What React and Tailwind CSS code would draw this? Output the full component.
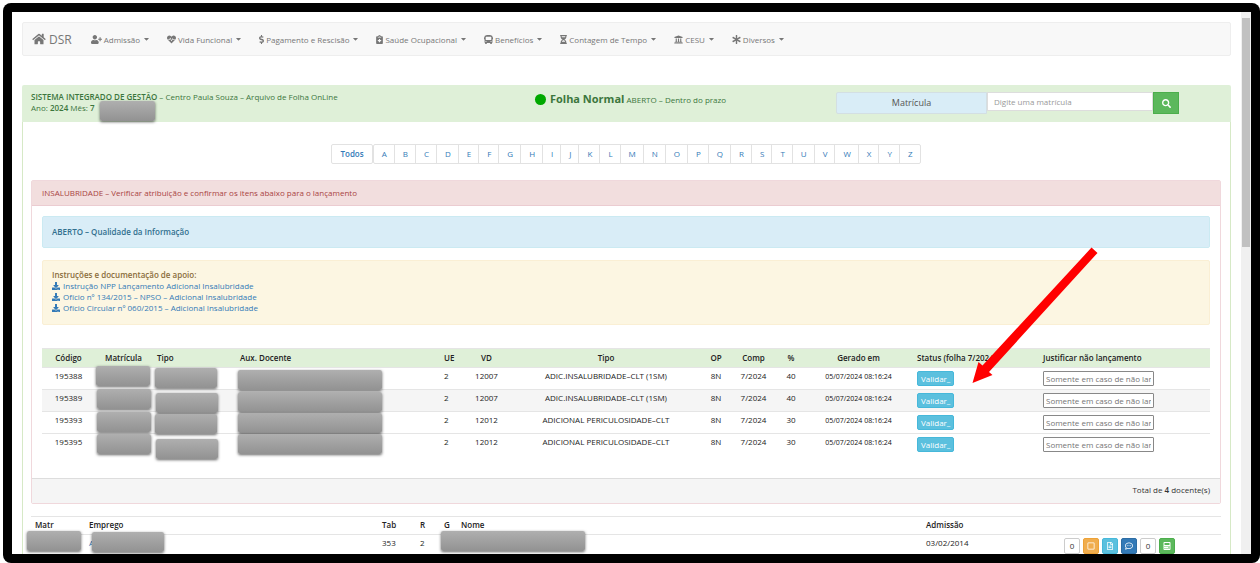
import clsx from 'clsx'
import {
  FaHome, FaUserPlus, FaHeartbeat, FaDollarSign, FaNotesMedical, FaBus, FaHourglassHalf,
  FaUniversity, FaAsterisk, FaSearch, FaDownload, FaCaretDown, FaRegSquare, FaRegFileAlt,
  FaRegCommentDots, FaCalculator,
} from 'react-icons/fa'

const MENU = [
  { label: 'Admissão', icon: FaUserPlus, width: 'w-[11px]' },
  { label: 'Vida Funcional', icon: FaHeartbeat, width: 'w-[9px]' },
  { label: 'Pagamento e Rescisão', icon: FaDollarSign, width: 'w-[5px]' },
  { label: 'Saúde Ocupacional', icon: FaNotesMedical, width: 'w-[7px]' },
  { label: 'Benefícios', icon: FaBus, width: 'w-[9px]' },
  { label: 'Contagem de Tempo', icon: FaHourglassHalf, width: 'w-[7px]' },
  { label: 'CESU', icon: FaUniversity, width: 'w-[9px]' },
  { label: 'Diversos', icon: FaAsterisk, width: 'w-[9px]' },
]

const LETTERS = 'ABCDEFGHIJKLMNOPQRSTUVWXYZ'.split('')

const DOCS = [
  'Instrução NPP Lançamento Adicional Insalubridade',
  'Ofício nº 134/2015 – NPSO – Adicional Insalubridade',
  'Ofício Circular nº 060/2015 – Adicional Insalubridade',
]

const INSAL = 'ADIC.INSALUBRIDADE–CLT (1SM)'
const PERIC = 'ADICIONAL PERICULOSIDADE–CLT'

// masks: position of the cover over matrícula, tipo and docente
const ROWS = [
  { codigo: '195388', vd: '12007', tipo: INSAL, pct: 40, masks: ['left-px -top-0.5', 'left-[3px] top-0', 'left-[3px] top-0.5'] },
  { codigo: '195389', vd: '12007', tipo: INSAL, pct: 40, active: true, masks: ['left-0.5 -top-px', 'left-1 top-[3px]', 'left-[3px] top-0.5'] },
  { codigo: '195393', vd: '12012', tipo: PERIC, pct: 30, masks: ['left-0.5 top-0', 'left-[3px] top-0.5', 'left-[3px] top-px'] },
  { codigo: '195395', vd: '12012', tipo: PERIC, pct: 30, masks: ['left-0.5 top-0', 'left-1 top-[5px]', 'left-[3px] top-0'] },
]

const ACTIONS = [
  { label: '0', color: 'bg-white border-[#ccc] text-[#333]' },
  { label: 'Marcar', icon: FaRegSquare, color: 'bg-[#f0ad4e] border-[#eea236] text-white' },
  { label: 'Arquivo', icon: FaRegFileAlt, color: 'bg-[#5bc0de] border-[#46b8da] text-white' },
  { label: 'Comentários', icon: FaRegCommentDots, color: 'bg-[#337ab7] border-[#2e6da4] text-white' },
  { label: '0', color: 'bg-white border-[#ccc] text-[#333]' },
  { label: 'Calcular', icon: FaCalculator, color: 'bg-[#5cb85c] border-[#4cae4c] text-white' },
]

function Mask({ className }) {
  return (
    <span
      className={clsx(
        'absolute z-10 h-5 rounded-xs bg-linear-to-b from-[#afafaf] to-[#929292] shadow-[0_1px_3px_rgba(0,0,0,0.6)]',
        className,
      )}
    />
  )
}

function Navbar() {
  return (
    <nav className="flex h-[34px] items-center rounded-xs border border-[#eee] bg-[#f8f8f8] pl-[9px] text-[#777]">
      <a href="#" className="mr-[10px] flex items-center gap-[3px] text-[12px]">
        <FaHome className="h-3 w-3.5" />DSR
      </a>
      {MENU.map(({ label, icon: Icon, width }) => (
        <a key={label} href="#" className="flex items-center gap-0.5 px-[9px]">
          <Icon className={clsx('h-[9px]', width)} />
          {label}
          <FaCaretDown className="ml-0.5 h-2 w-[5px]" />
        </a>
      ))}
    </nav>
  )
}

function PanelHeading() {
  return (
    <header className="grid h-[37px] grid-cols-3 rounded-t-xs bg-[#dff0d8] px-[9px] text-[#3c763d]">
      <div className="relative pt-1.5">
        <p className="whitespace-nowrap"><b>SISTEMA INTEGRADO DE GESTÃO</b> – Centro Paula Souza – Arquivo de Folha OnLine</p>
        <p>Ano: <b>2024</b> Mês: <b>7</b></p>
        <Mask className="left-[69px] top-4 w-[55px]" />
      </div>
      <div className="flex h-7 items-center justify-center gap-1 pl-2">
        <span className="size-[11px] rounded-full bg-[#00a800]" />
        <p><strong className="text-[11px] font-bold">Folha Normal</strong> ABERTO – Dentro do prazo</p>
      </div>
      <form className="mr-[43px] ml-[11px] flex items-start pt-[7px]" onSubmit={e => e.preventDefault()}>
        <label htmlFor="matricula" className="flex h-[22px] w-[151px] items-center justify-center rounded-l-xs border border-[#d3dfe3] bg-[#d9edf7] pb-0.5 text-[9px] text-[#555]">
          Matrícula
        </label>
        <input
          id="matricula"
          type="text"
          placeholder="Digite uma matrícula"
          className="h-[19px] min-w-0 flex-1 border border-[#ddd] bg-white px-1.5 outline-none placeholder:text-[#999]"
        />
        <button aria-label="Buscar" className="flex h-[22px] w-[26px] items-center justify-center border border-[#4cae4c] bg-[#5cb85c] text-white">
          <FaSearch size={9} />
        </button>
      </form>
    </header>
  )
}

function Pagination() {
  return (
    <div className="flex h-5 justify-center text-[#337ab7]">
      <a href="#" className="flex items-center rounded-xs border border-[#e2e2e2] px-2 pb-0.5 font-semibold">Todos</a>
      <div className="flex rounded-xs border border-[#e2e2e2]">
        {LETTERS.map(l => (
          <a key={l} href="#" className="flex items-center border-l border-[#e2e2e2] pr-[7px] pb-0.5 pl-2 first:border-l-0">{l}</a>
        ))}
      </div>
    </div>
  )
}

function TeacherTable() {
  return (
    <table className="mt-[23px] w-full table-fixed text-left text-[#222]">
      <colgroup>
        <col className="w-[53px]" />
        <col className="w-[57px]" />
        <col className="w-[83px]" />
        <col className="w-[204px]" />
        <col className="w-[24px]" />
        <col className="w-[47px]" />
        <col className="w-[192px]" />
        <col className="w-[28px]" />
        <col className="w-[47px]" />
        <col className="w-[28px]" />
        <col className="w-[107px]" />
        <col className="w-[126px]" />
        <col className="w-[172px]" />
      </colgroup>
      <thead>
        <tr className="h-[19px] border-y border-[#e5e5e5] bg-[#dff0d8] [&_th]:pb-px">
          <th className="text-center">Código</th>
          <th className="text-center">Matrícula</th>
          <th className="pl-[5px]">Tipo</th>
          <th className="pl-[5px]">Aux. Docente</th>
          <th className="pl-[5px]">UE</th>
          <th className="text-center">VD</th>
          <th className="text-center">Tipo</th>
          <th className="text-center">OP</th>
          <th className="text-center">Comp</th>
          <th className="text-center">%</th>
          <th className="text-center">Gerado em</th>
          <th className="pl-[5px]">Status (folha 7/2024)</th>
          <th className="pl-[5px]">Justificar não lançamento</th>
        </tr>
      </thead>
      <tbody>
        {ROWS.map(row => (
          <tr key={row.codigo} className={clsx('h-[22px] border-t border-[#e5e5e5] align-top leading-[15px]', row.active && 'bg-[#f5f5f5]')}>
            <td className="text-center">{row.codigo}</td>
            <td className="relative"><Mask className={clsx('w-[54px]', row.masks[0])} /></td>
            <td className="relative"><Mask className={clsx('w-[62px]', row.masks[1])} /></td>
            <td className="relative"><Mask className={clsx('w-[144px]', row.masks[2])} /></td>
            <td className="pl-[5px]">2</td>
            <td className="text-center">{row.vd}</td>
            <td className="text-center">{row.tipo}</td>
            <td className="text-center">8N</td>
            <td className="text-center">7/2024</td>
            <td className="text-center">{row.pct}</td>
            <td className="text-center text-[7px] leading-[17px] font-medium text-[#111]">05/07/2024 08:16:24</td>
            <td className="pt-[3px] pl-[5px]">
              <button className="block h-[15px] rounded-xs border border-[#46b8da] bg-[#5bc0de] px-[3px] leading-[11px] font-medium text-white">Validar_</button>
            </td>
            <td className="pt-[3px] pl-[5px]">
              <input
                type="text"
                aria-label="Justificar não lançamento"
                placeholder="Somente em caso de não lançar"
                className="block h-[15px] w-[111px] rounded-[1px] border border-[#888] bg-white px-0.5 pb-px outline-none placeholder:text-[#757575]"
              />
            </td>
          </tr>
        ))}
      </tbody>
    </table>
  )
}

function StaffTable() {
  return (
    <table className="mt-3 w-full table-fixed text-left text-[#222]">
      <colgroup>
        <col className="w-[54px]" />
        <col className="w-[293px]" />
        <col className="w-[38px]" />
        <col className="w-[24px]" />
        <col className="w-[17px]" />
        <col className="w-[465px]" />
        <col className="w-[138px]" />
        <col className="w-[161px]" />
      </colgroup>
      <thead>
        <tr className="h-[18px] border-y border-[#e5e5e5] [&_th]:pb-px">
          <th className="pl-1">Matr</th>
          <th className="pl-1">Emprego</th>
          <th className="pl-1">Tab</th>
          <th className="pl-1">R</th>
          <th className="pl-1">G</th>
          <th className="pl-1">Nome</th>
          <th className="pl-1">Admissão</th>
          <th></th>
        </tr>
      </thead>
      <tbody>
        <tr className="h-[22px] align-top leading-[15px]">
          <td className="relative"><Mask className="-left-[4px] -top-[4px] w-[54px]" /></td>
          <td className="relative pl-1"><a href="#" className="text-[#337ab7]">A</a><Mask className="left-[7px] -top-[3px] w-[72px]" /></td>
          <td className="pl-1">353</td>
          <td className="pl-1">2</td>
          <td className="relative"><Mask className="left-px -top-[4px] w-[144px]" /></td>
          <td></td>
          <td className="pl-1">03/02/2014</td>
          <td className="pt-[3px] pl-1">
            <div className="flex gap-[3px]">
              {ACTIONS.map(({ label, icon: Icon, color }, i) => (
                <button key={i} aria-label={label} className={clsx('flex h-4 w-4 items-center justify-center rounded-xs border', color)}>
                  {Icon ? <Icon size={8} /> : label}
                </button>
              ))}
            </div>
          </td>
        </tr>
      </tbody>
    </table>
  )
}

export default function App() {
  return (
    <div className="h-screen bg-white pt-[3px] pl-[3px] font-['Open_Sans',sans-serif] text-[8px] leading-[11px] [&_b]:font-semibold [&_th]:font-semibold">
      <div className="relative flex h-full overflow-hidden rounded-lg bg-black p-[9px]">
        <div className="flex flex-1 overflow-hidden bg-white">
          <main className="min-w-0 flex-1 px-[10px] pt-[10px]">
            <Navbar />
            <section className="mt-[29px]">
              <PanelHeading />
              <div className="border-x border-[#d6e9c6] pt-[22px] pr-[9px] pb-10 pl-2">
                <Pagination />

                <section className="mt-4 rounded-xs border border-[#f0d8dc]">
                  <h2 className="flex h-[25px] items-center border-b border-[#ebccd1] bg-[#f2dede] px-[10px] pb-0.5 text-[#a94442]">
                    INSALUBRIDADE – Verificar atribuição e confirmar os itens abaixo para o lançamento
                  </h2>
                  <div className="px-[10px] pt-[10px] pb-[22px]">
                    <p className="flex h-8 items-center rounded-xs border border-[#cbeaf2] bg-[#d9edf7] px-[9px] pb-0.5 font-semibold text-[#31708f]">
                      ABERTO – Qualidade da Informação
                    </p>
                    <div className="mt-3 rounded-xs border border-[#faefd4] bg-[#fcf6e2] px-[9px] pt-2 pb-[11px] text-[#8a6d3b]">
                      <p className="font-semibold">Instruções e documentação de apoio:</p>
                      {DOCS.map(doc => (
                        <a key={doc} href="#" className="flex items-center gap-[3px] text-[#337ab7]">
                          <FaDownload size={8} />{doc}
                        </a>
                      ))}
                    </div>
                    <TeacherTable />
                  </div>
                  <footer className="flex h-[25px] items-center justify-end border-t border-[#ddd] bg-[#f5f5f5] px-[10px] pb-0.5 text-[#333]">
                    <p>Total de <b>4</b> docente(s)</p>
                  </footer>
                </section>

                <StaffTable />
              </div>
            </section>
          </main>
          {/* scrollbar */}
          <div className="w-[10px] bg-[#f0f0f0] px-px pt-1.5">
            <div className="h-[229px] bg-[#c1c1c1]" />
          </div>
        </div>

        {/* arrow pointing at the first "Validar" */}
        <svg className="absolute top-[241px] left-[966px] z-20 h-[140px] w-[130px]" viewBox="0 0 130 140" fill="#f00">
          <path d="M122.5 3.6 128.5 8.9 20 128 23.5 131 3.5 139 9.5 118 13.5 121.5Z" />
        </svg>
      </div>
    </div>
  )
}
